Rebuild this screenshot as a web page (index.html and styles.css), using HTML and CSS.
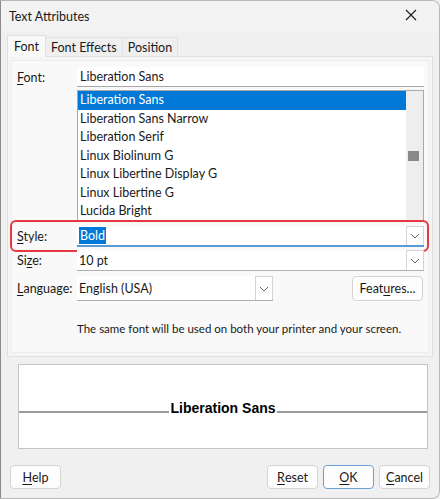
FILE: index.html
```html
<!DOCTYPE html>
<html>
<head>
<meta charset="utf-8">
<link rel="stylesheet" href="styles.css">
</head>
<body>
<div class="dialog">
  <div class="titlebar">
    <span class="title">Text Attributes</span>
    <span class="close"><svg width="12" height="12" viewBox="0 0 12 12"><path d="M1 1 L11 11 M11 1 L1 11" stroke="#1a1a1a" stroke-width="1.1" fill="none"/></svg></span>
  </div>
  <div class="tabs">
    <div class="tab active">Font</div>
    <div class="tab">Font Effects</div>
    <div class="tab">Position</div>
  </div>
  <div class="tabpage">
    <div class="page">
      <div class="row row-font">
        <label class="lbl"><u>F</u>ont:</label>
        <div class="field text-field">Liberation Sans</div>
      </div>
      <div class="row row-list">
        <div class="lbl"></div>
        <div class="list">
          <div class="items">
            <div class="item sel">Liberation Sans</div>
            <div class="item">Liberation Sans Narrow</div>
            <div class="item">Liberation Serif</div>
            <div class="item">Linux Biolinum G</div>
            <div class="item">Linux Libertine Display G</div>
            <div class="item">Linux Libertine G</div>
            <div class="item">Lucida Bright</div>
          </div>
          <div class="scrollbar"><div class="thumb"></div></div>
        </div>
      </div>
      <div class="row row-style">
        <label class="lbl"><u>S</u>tyle:</label>
        <div class="field combo focus">
          <span class="value"><span class="hl">Bold</span></span>
          <span class="drop"><svg width="10" height="6" viewBox="0 0 10 6"><path d="M1 1 L5 5 L9 1" stroke="#666" stroke-width="1" fill="none"/></svg></span>
        </div>
      </div>
      <div class="row row-size">
        <label class="lbl">Si<u>z</u>e:</label>
        <div class="field combo">
          <span class="value">10 pt</span>
          <span class="drop"><svg width="10" height="6" viewBox="0 0 10 6"><path d="M1 1 L5 5 L9 1" stroke="#666" stroke-width="1" fill="none"/></svg></span>
        </div>
      </div>
      <div class="row row-lang">
        <label class="lbl"><u>L</u>anguage:</label>
        <div class="field combo lang">
          <span class="value">English (USA)</span>
          <span class="drop"><svg width="10" height="6" viewBox="0 0 10 6"><path d="M1 1 L5 5 L9 1" stroke="#666" stroke-width="1" fill="none"/></svg></span>
        </div>
        <div class="spacer"></div>
        <button class="btn feat">Feat<u>u</u>res...</button>
      </div>
      <div class="row row-note">
        <div class="lbl"></div>
        <div class="note">The same font will be used on both your printer and your screen.</div>
      </div>
    </div>
  </div>
  <div class="preview">
    <div class="baseline"></div>
    <span class="sample">Liberation Sans</span>
  </div>
  <div class="buttons">
    <button class="btn"><u>H</u>elp</button>
    <div class="spacer"></div>
    <button class="btn"><u>R</u>eset</button>
    <button class="btn ok"><u>O</u>K</button>
    <button class="btn"><u>C</u>ancel</button>
  </div>
</div>
</body>
</html>
```
FILE: styles.css
```css
* { box-sizing: border-box; }
html, body { margin: 0; padding: 0; background: #f0f0f0; }
body { font-family: "Lato", "Noto Sans", sans-serif; font-size: 12.5px; color: #1a1a1a; }
u { text-decoration-thickness: 1px; text-underline-offset: 2px; }

.dialog {
  width: 440px; height: 499px;
  background: #f0f0f0;
  border: 1px solid #b8b8b8;
  border-left-color: #8a8a8a;
  border-radius: 0 8px 8px 0;
  overflow: hidden;
  display: flex; flex-direction: column;
}
.titlebar {
  height: 30px; flex: none;
  background: #f3f3f3;
  display: flex; align-items: center;
  padding: 0 0 0 8px;
}
.title { flex: 1; font-size: 12.5px; margin-top: 1px; }
.close { width: 40px; display: flex; justify-content: center; padding-right: 16px; margin-top: -3px; }

.tabs { display: flex; align-items: flex-end; height: 26px; padding-left: 6px; flex: none; }
.tab {
  height: 20px; padding: 0 5px;
  border: 1px solid #e2e2e2; border-bottom: none;
  background: #efefef;
  display: flex; align-items: center;
  font-size: 12.5px;
  margin-left: -1px;
}
.tab.active { height: 22px; background: #f9f9f9; padding: 0 6px 0 6px; margin-left: 0; border-color: #e0e0e0; position: relative; z-index: 1; }

.tabpage {
  margin: 0 6px 0 6px;
  height: 301px; flex: none;
  border: 1px solid #e0e0e0;
  background: #f5f5f5;
  padding: 3px;
  margin-top: -1px;
}
.page {
  height: 100%;
  background: #f9f9f9;
  border: 1px solid #ececec;
  padding: 0 4px 0 4px;
  display: flex; flex-direction: column;
}
.row { display: flex; align-items: center; }
.lbl { width: 61px; flex: none; padding-left: 1px; font-size: 12.5px; white-space: nowrap; }

.field { background: #fff; height: 20px; flex: 1; display: flex; align-items: center; font-size: 12.5px; }
.text-field { padding-left: 3px; border-bottom: 1px solid #a8a8a8; }
.row-font { margin-top: 6px; }

.row-list { margin-top: 3px; }
.list {
  flex: 1; height: 130px;
  border: 1px solid #a9a9a9; border-bottom: none;
  background: #fff; display: flex;
}
.items { flex: 1; }
.item { height: 18.5px; line-height: 18.5px; padding-left: 2px; font-size: 12.5px; white-space: nowrap; }
.item.sel { background: #0078d7; color: #fff; }
.scrollbar { width: 17px; background: #eeeeee; position: relative; }
.thumb { position: absolute; left: 2px; top: 60px; width: 11px; height: 10px; background: #8a8a8a; }

.row-style {
  border: 2px solid #e5393f; border-radius: 6px;
  margin: 0 -5px 0 -6px;
  height: 32px;
  padding: 0 3px 0 4px;
  align-items: center;
}
.combo { border: none; border-bottom: 1px solid #b0b0b0; padding-left: 2px; position: relative; }
.combo .value { flex: 1; }
.combo.focus { height: 21px; border-bottom: 2px solid #5b9bd5; margin-top: 1px; }
.hl { background: #0078d7; color: #fff; padding: 1px 1px; }
.drop {
  width: 18px; height: 100%;
  border: 1px solid #d4d4d4; border-bottom: none;
  display: flex; align-items: center; justify-content: center;
  background: #fff;
}
.row-size { margin-top: -2px; height: 21px; }
.row-size .combo { height: 21px; }
.row-lang { margin-top: 5px; }
.row-lang .combo.lang { flex: none; width: 196px; height: 25px; }
.spacer { flex: 1; }
.btn {
  font-family: inherit; font-size: 12.5px; color: #1a1a1a;
  background: #fdfdfd;
  border: 1px solid #d3d3d3; border-radius: 4px;
  height: 24px; padding: 0;
  display: inline-flex; align-items: center; justify-content: center;
}
.feat { width: 71px; height: 25px; margin-right: 1px; }
.row-note { margin-top: 21px; }
.note { font-size: 11.5px; white-space: nowrap; }

.preview {
  margin: 7px 11px 0 17px;
  height: 85px; flex: none;
  border: 1px solid #c4c4c4;
  background: #fff;
  position: relative;
  display: flex; align-items: center; justify-content: center;
}
.baseline { position: absolute; left: 0; right: 0; top: 46px; height: 2px; background: #9a9a9a; }
.sample {
  position: relative; background: #fff;
  font-family: "Liberation Sans", Arial, sans-serif; font-weight: bold; font-size: 14px; color: #000;
  line-height: 14px; padding: 0 1px; margin-top: 2px;
}

.buttons { display: flex; margin: 16px 9px 0 9px; gap: 0; }
.buttons .btn { width: 51px; }
.buttons .ok { border-color: #6ea0d6; margin: 0 5px 0 5px; }
```
